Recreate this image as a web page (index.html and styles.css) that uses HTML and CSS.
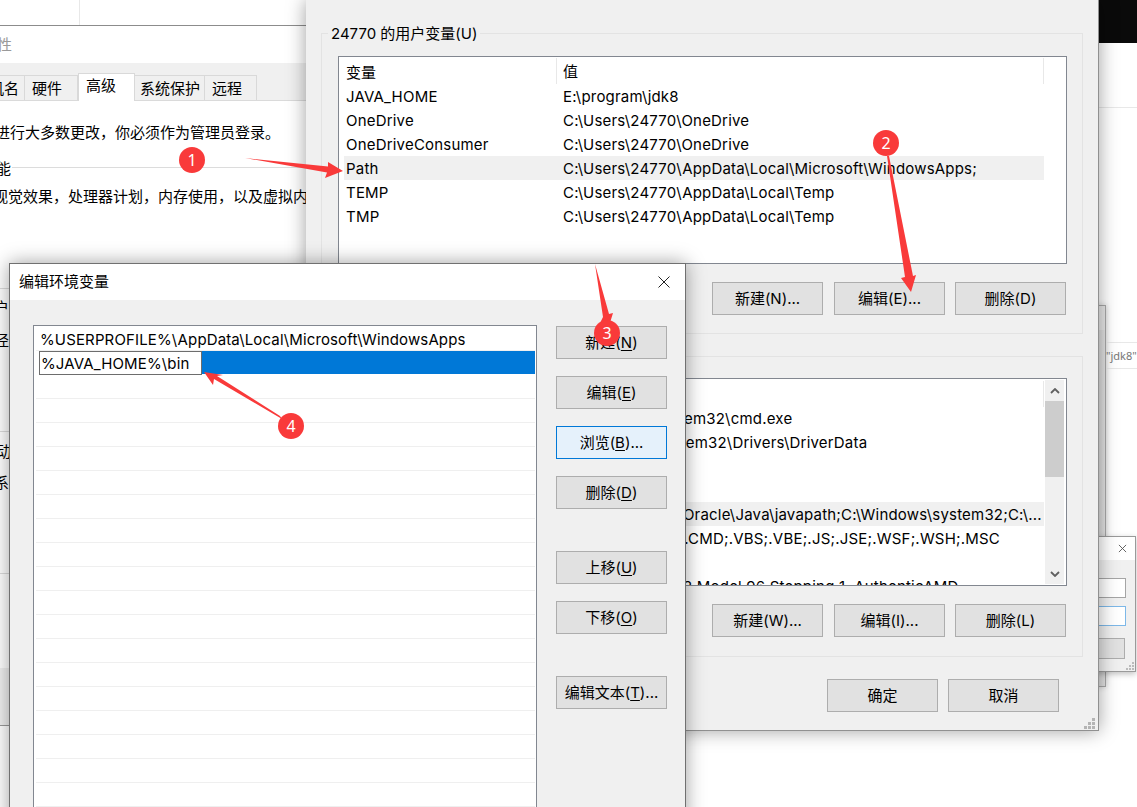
FILE: index.html
```html
<!DOCTYPE html>
<html lang="zh-CN">
<head>
<meta charset="utf-8">
<title>编辑环境变量</title>
<link rel="stylesheet" href="styles.css">
</head>
<body>
<div class="desk">
  <div class="top-black"></div>
  <div class="top-rule"></div>
  <div class="top-strip"><div class="top-strip-cell"></div></div>

  <div class="props win">
    <div class="props-title"><span class="props-title-text">系统属性</span></div>
    <div class="tabs">
      <div class="tab tab-first">计算机名</div>
      <div class="tab tab-hw">硬件</div>
      <div class="tab tab-on">高级</div>
      <div class="tab tab-sys">系统保护</div>
      <div class="tab tab-far">远程</div>
    </div>
    <div class="props-body">
      <p class="pl pl-a">要进行大多数更改，你必须作为管理员登录。</p>
      <div class="sec sec-a"><span class="sec-text">性能</span><span class="sec-line"></span></div>
      <p class="pl pl-b">视觉效果，处理器计划，内存使用，以及虚拟内存</p>
      <div class="rule rule-a"></div>
      <p class="pl pl-c">用户配置文件</p>
      <p class="pl pl-d">路径</p>
      <div class="rule rule-b"></div>
      <p class="pl pl-e">启动</p>
      <p class="pl pl-f">系统</p>
      <div class="rule rule-c"></div>
    </div>
    <div class="props-foot"></div>
  </div>

  <div class="back2 win"></div>
  <div class="note">"jdk8"</div>

  <div class="mini win">
    <div class="mini-title">
      <svg class="mini-x" viewBox="0 0 10 10" aria-hidden="true"><path d="M1 1l8 8M9 1l-8 8"/></svg>
    </div>
    <div class="mini-body">
      <div class="mini-input"></div>
      <div class="mini-input mini-focus"></div>
      <div class="mini-btn">确定</div>
      <svg class="grip-sm" viewBox="0 0 8 8" aria-hidden="true"><path d="M6 0h2v2H6zM3 3h2v2H3zM6 3h2v2H6zM0 6h2v2H0zM3 6h2v2H3zM6 6h2v2H6z"/></svg>
    </div>
  </div>

  <div class="env win">
    <div class="group">
      <span class="legend">24770 的用户变量(U)</span>
      <div class="list">
        <div class="list-main">
          <div class="lhead"><span class="c1">变量</span><span class="c2">值</span></div>
          <div class="row"><span class="c1">JAVA_HOME</span><span class="c2">E:\program\jdk8</span></div>
          <div class="row"><span class="c1">OneDrive</span><span class="c2">C:\Users\24770\OneDrive</span></div>
          <div class="row"><span class="c1">OneDriveConsumer</span><span class="c2">C:\Users\24770\OneDrive</span></div>
          <div class="row row-on"><span class="c1">Path</span><span class="c2">C:\Users\24770\AppData\Local\Microsoft\WindowsApps;</span></div>
          <div class="row"><span class="c1">TEMP</span><span class="c2">C:\Users\24770\AppData\Local\Temp</span></div>
          <div class="row"><span class="c1">TMP</span><span class="c2">C:\Users\24770\AppData\Local\Temp</span></div>
        </div>
      </div>
      <div class="btns">
        <div class="btn">新建(N)...</div>
        <div class="btn btn-mid">编辑(E)...</div>
        <div class="btn">删除(D)</div>
      </div>
    </div>
    <div class="group group-sys">
      <span class="legend">系统变量(S)</span>
      <div class="list">
        <div class="list-main">
          <div class="lhead"><span class="c1">变量</span><span class="c2">值</span></div>
          <div class="row"><span class="c1">ComSpec</span><span class="c2">C:\Windows\system32\cmd.exe</span></div>
          <div class="row"><span class="c1">DriverData</span><span class="c2">C:\Windows\System32\Drivers\DriverData</span></div>
          <div class="row"><span class="c1">NUMBER_OF_PROCESSORS</span><span class="c2">12</span></div>
          <div class="row"><span class="c1">OS</span><span class="c2">Windows_NT</span></div>
          <div class="row row-on"><span class="c1">Path</span><span class="c2">C:\ProgramData\Oracle\Java\javapath;C:\Windows\system32;C:\...</span></div>
          <div class="row"><span class="c1">PATHEXT</span><span class="c2">.COM;.EXE;.BAT;.CMD;.VBS;.VBE;.JS;.JSE;.WSF;.WSH;.MSC</span></div>
          <div class="row"><span class="c1">PROCESSOR_ARCHITECTURE</span><span class="c2">AMD64</span></div>
          <div class="row"><span class="c1">PROCESSOR_IDENTIFIER</span><span class="c2">AMD64 Family 23 Model 96 Stepping 1, AuthenticAMD</span></div>
        </div>
        <div class="sbar">
          <svg class="sbar-arrow" viewBox="0 0 10 6" aria-hidden="true"><path d="M1 5l4-4 4 4"/></svg>
          <div class="sbar-thumb"></div>
          <svg class="sbar-arrow sbar-down" viewBox="0 0 10 6" aria-hidden="true"><path d="M1 1l4 4 4-4"/></svg>
        </div>
      </div>
      <div class="btns">
        <div class="btn">新建(W)...</div>
        <div class="btn btn-mid">编辑(I)...</div>
        <div class="btn">删除(L)</div>
      </div>
    </div>
    <div class="env-foot">
      <div class="btn">确定</div>
      <div class="btn">取消</div>
    </div>
    <svg class="grip" viewBox="0 0 11 11" aria-hidden="true"><path d="M8 0h3v3H8zM4 4h3v3H4zM8 4h3v3H8zM0 8h3v3H0zM4 8h3v3H4zM8 8h3v3H8z"/></svg>
  </div>

  <div class="edit win">
    <div class="edit-title">
      <span>编辑环境变量</span>
      <svg class="edit-x" viewBox="0 0 12 12" aria-hidden="true"><path d="M.5.5l11 11M11.500.5l-11 11"/></svg>
    </div>
    <div class="edit-body">
      <div class="plist">
        <div class="prow">%USERPROFILE%\AppData\Local\Microsoft\WindowsApps</div>
        <div class="prow prow-edit">
          <div class="pinput">%JAVA_HOME%\bin</div>
          <div class="pfill"></div>
        </div>
        <div class="pempty"></div>
      </div>
      <div class="pbtns">
        <div class="btn">新建(<u>N</u>)</div>
        <div class="btn">编辑(<u>E</u>)</div>
        <div class="btn btn-focus">浏览(<u>B</u>)...</div>
        <div class="btn">删除(<u>D</u>)</div>
        <div class="btn btn-far">上移(<u>U</u>)</div>
        <div class="btn">下移(<u>O</u>)</div>
        <div class="btn btn-far">编辑文本(<u>T</u>)...</div>
      </div>
    </div>
  </div>

  <svg class="marks" viewBox="0 0 1137 807" aria-hidden="true">
    <path class="mark" d="M245 158L328 166.500 328 162 343 171 325 178 327 172.500Z"/>
    <path class="mark" d="M887 156L889 156 913 276 916 275 911 292 901 278 905 277Z"/>
    <path class="mark" d="M595 264L609 314 613 313 609 326 600 323 603 317Z"/>
    <path class="mark" d="M280 416L282 419 214 379 213 385 204 372 223 375 217 376Z"/>
    <circle class="mark" cx="192" cy="160" r="13"/>
    <circle class="mark" cx="886" cy="143" r="13"/>
    <circle class="mark" cx="607" cy="333" r="13"/>
    <circle class="mark" cx="291" cy="426" r="13"/>
    <text class="mark-text" x="192" y="165.500">1</text>
    <text class="mark-text" x="886" y="148.500">2</text>
    <text class="mark-text" x="607" y="338.500">3</text>
    <text class="mark-text" x="291" y="431.500">4</text>
  </svg>
</div>
</body>
</html>
```
FILE: styles.css
```css
* { box-sizing: border-box; }
html, body { margin: 0; padding: 0; background: #fff; }
body { font-family: Inter, "Noto Sans CJK SC", sans-serif; font-size: 15px; color: #000; }
p { margin: 0; }
.desk { position: relative; width: 1137px; height: 807px; overflow: hidden; background: #fff; }
.win { position: absolute; }

.top-black { position: absolute; left: 1098px; top: 0; width: 39px; height: 43px; background: #0a0a0a; }
.top-rule { position: absolute; left: 1098px; top: 107px; width: 39px; height: 1px; background: #e8e8e8; }
.top-strip { position: absolute; left: 0; top: 0; width: 306px; height: 25px; }
.top-strip-cell { width: 80px; height: 25px; border-right: 1px solid #e8e8e8; }

/* system properties window behind */
.props { left: 0; top: 25px; width: 306px; height: 701px; background: #fff; border-top: 1px solid #8c8c8c; border-bottom: 1px solid #9a9a9a; overflow: hidden; display: flex; flex-direction: column; }
.props-title { height: 37px; line-height: 37px; color: #9a9a9a; white-space: nowrap; }
.props-title-text { display: inline-block; margin-left: -48px; }
.tabs { height: 38px; flex: none; background: #f0f0f0; border-bottom: 1px solid #dadada; display: flex; align-items: flex-end; white-space: nowrap; }
.tab { height: 25px; line-height: 25px; background: #f0f0f0; border: 1px solid #d9d9d9; border-bottom: 0; border-left: 0; padding-left: 7px; flex: none; }
.tab-first { width: 83px; margin-left: -58px; padding-left: 17px; }
.tab-hw { width: 53px; }
.tab-on { width: 57px; height: 28px; line-height: 24px; background: #fff; border-left: 1px solid #d9d9d9; margin-bottom: -1px; position: relative; }
.tab-sys { width: 70px; padding-left: 5px; }
.tab-far { width: 52px; }
.props-body { flex: 1; display: flex; flex-direction: column; white-space: nowrap; }
.pl { height: 24px; line-height: 24px; margin-left: -20px; }
.pl-a { margin-top: 20px; }
.sec { display: flex; align-items: center; height: 20px; margin-top: 12px; }
.sec-text { margin-left: -19px; }
.sec-line { flex: 1; height: 1px; background: #dcdcdc; margin-left: 1px; }
.pl-b { margin-left: -7px; margin-top: 8px; }
.rule { height: 1px; background: #dcdcdc; flex: none; }
.rule-a { margin-top: 79px; }
.pl-c { margin-left: -21px; margin-top: 7px; }
.pl-d { margin-left: -21px; margin-top: 9px; }
.rule-b { margin-top: 78px; }
.pl-e { margin-left: -19px; margin-top: 8px; }
.pl-f { margin-left: -6px; margin-top: 7px; }
.rule-c { margin-top: 78px; }
.props-foot { height: 57px; flex: none; background: #f0f0f0; margin-top: auto; }

/* window behind on the right */
.back2 { left: 1080px; top: 305px; width: 26px; height: 382px; background: linear-gradient(#e8e8e8 0, #e8e8e8 24px, transparent 24px), linear-gradient(to right, #c4c4c4, #e4e4e4); border: 1px solid #a8a8a8; box-shadow: 0 0 6px rgba(0,0,0,.2); }
.note { position: absolute; left: 1106px; top: 342px; width: 31px; height: 27px; border-top: 1px solid #e8e8e8; border-bottom: 1px solid #e8e8e8; font-family: "Noto Sans", sans-serif; font-size: 11px; line-height: 26px; color: #777; white-space: nowrap; overflow: hidden; }

.mini { left: 1040px; top: 536px; width: 96px; height: 136px; background: #f0f0f0; border: 1px solid #9a9a9a; box-shadow: 0 2px 6px rgba(0,0,0,.25); display: flex; flex-direction: column; }
.mini-title { height: 23px; flex: none; background: #fff; position: relative; display: flex; justify-content: flex-end; align-items: center; padding-right: 8px; }
.mini-x { width: 9px; height: 9px; }
.mini-x path { fill: none; stroke: #555; stroke-width: 1; }
.mini-body { flex: 1; display: flex; flex-direction: column; align-items: flex-end; padding-right: 9px; padding-top: 18px; position: relative; }
.mini-input { width: 70px; height: 20px; background: #fff; border: 1px solid #a5a5a5; }
.mini-focus { margin-top: 8px; border-color: #7db8e8; }
.mini-btn { width: 70px; height: 21px; margin-top: 12px; margin-right: 1px; background: #e1e1e1; border: 1px solid #adadad; font-size: 14px; line-height: 19px; padding-left: 12px; color: #000; white-space: nowrap; overflow: hidden; }
.grip-sm { position: absolute; right: 1px; bottom: 1px; width: 8px; height: 8px; fill: #bbb; }

/* environment variables window */
.env { left: 306px; top: 0; width: 793px; height: 731px; background: #f0f0f0; border-right: 1px solid #909090; border-bottom: 1px solid #909090; box-shadow: 0 0 18px rgba(0,0,0,.38); padding: 33px 0 0 15px; }
.group { position: relative; width: 762px; height: 301px; border: 1px solid #e3e3e3; padding: 22px 15px 0 16px; }
.group-sys { margin-top: 22px; padding-top: 21px; }
.legend { position: absolute; left: 6px; top: -10px; height: 20px; line-height: 20px; padding: 0 3px; background: #f0f0f0; white-space: nowrap; }
.list { height: 208px; background: #fff; border: 1px solid #828790; display: flex; overflow: hidden; }
.list-main { flex: 1; min-width: 0; padding-left: 5px; height: 100%; overflow: hidden; }
.group-sys .list { padding: 1px 2px 0 0; }
.lhead { height: 27px; width: 700px; display: flex; align-items: center; position: relative; padding-top: 1px; }
.lhead .c2 { border-left: 1px solid #e8e8e8; height: 26px; line-height: 28px; padding-left: 6px; }
.lhead::after { content: ""; width: 1px; height: 26px; background: #e8e8e8; position: absolute; right: 0; top: 1px; }
.row { height: 24px; width: 700px; display: flex; align-items: center; white-space: nowrap; letter-spacing: .2px; }
.row-on { background: #f0f0f0; }
.c1 { width: 212px; flex: none; padding-left: 2px; overflow: hidden; }
.c2 { flex: 1; padding-left: 7px; min-width: 0; overflow: hidden; }
.group-sys .lhead { height: 26px; }
.sbar { width: 19px; flex: none; background: #f0f0f0; display: flex; flex-direction: column; height: 204px; }
.sbar-arrow { width: 10px; height: 6px; margin: 8px auto 7px; flex: none; }
.sbar-arrow path { fill: none; stroke: #606060; stroke-width: 1.800; }
.sbar-thumb { height: 76px; background: #cdcdcd; flex: none; }
.sbar-down { margin-top: auto; }
.btns { display: flex; justify-content: flex-end; gap: 10px; margin-top: 18px; margin-right: 1px; }
.btn { width: 111px; height: 33px; line-height: 31px; background: #e1e1e1; border: 1px solid #adadad; text-align: center; white-space: nowrap; flex: none; }
.btn-mid { margin-left: 1px; }
.env-foot { display: flex; justify-content: flex-end; gap: 10px; margin-top: 22px; margin-right: 39px; }
.grip { position: absolute; right: 3px; bottom: 1px; width: 11px; height: 11px; fill: #b4b4b4; }

/* edit dialog */
.edit { left: 9px; top: 263px; width: 677px; height: 600px; background: #f0f0f0; border: 1px solid #707070; box-shadow: 0 0 18px rgba(0,0,0,.38); }
.edit-title { height: 36px; background: #fff; display: flex; align-items: center; justify-content: space-between; padding: 0 15px 3px 9px; }
.edit-x { width: 12px; height: 12px; margin-top: 3px; }
.edit-x path { fill: none; stroke: #222; stroke-width: 1; }
.edit-body { display: flex; align-items: flex-start; padding: 25px 18px 0 23px; gap: 19px; }
.plist { width: 504px; height: 560px; background: #fff; border: 1px solid #828790; padding: 1px 1px 0 2px; display: flex; flex-direction: column; }
.prow { height: 24px; line-height: 26px; padding-left: 4px; border-bottom: 1px solid #f0f0f0; white-space: nowrap; flex: none; letter-spacing: .14px; }
.prow-edit { display: flex; padding-left: 3px; border-bottom: 0; }
.pinput { width: 163px; height: 24px; line-height: 23px; border: 1px solid #6d6d6d; background: #fff; padding-left: 1px; flex: none; }
.pfill { flex: 1; height: 23px; background: #0078d7; }
.pempty { flex: 1; background: repeating-linear-gradient(#fff 0, #fff 23px, #efefef 23px, #efefef 24px); }
.pbtns { display: flex; flex-direction: column; gap: 17px; margin-top: 1px; }
.btn-far { margin-top: 25px; }
.btn-focus { background: #e5f1fb; border-color: #0078d7; }
u { text-underline-offset: 2px; }

/* annotations */
.marks { position: absolute; left: 0; top: 0; width: 1137px; height: 807px; }
.mark { fill: #f93a3a; }
.mark-text { fill: #fff; font-size: 16px; text-anchor: middle; font-family: "Noto Sans", sans-serif; }
```
